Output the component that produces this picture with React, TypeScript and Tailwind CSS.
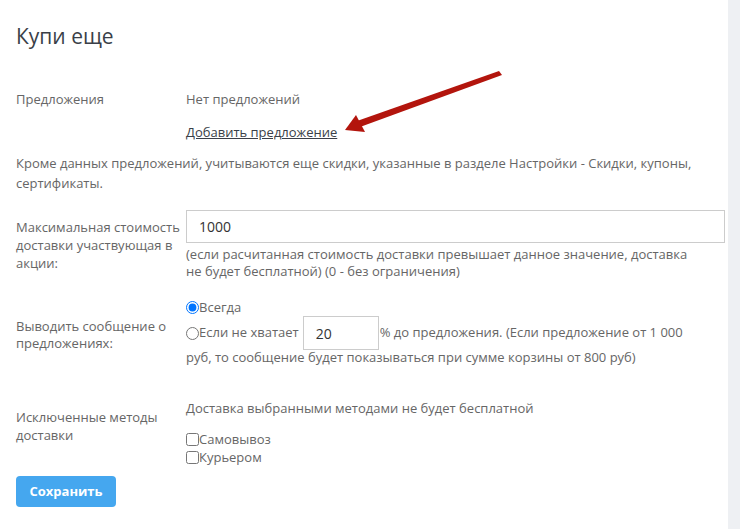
import React from "react";

const Arrow = () => (
  <svg
    className="pointer-events-none absolute left-0 top-0"
    width="740"
    height="200"
    viewBox="0 0 740 200"
  >
    <polygon points="499,71 502,75 360,127 357,121" fill="#b3150d" />
    <polygon points="345,130 356,115 365,132" fill="#b3150d" />
  </svg>
);

export default function App() {
  return (
    <div className="flex min-h-[529px] w-[740px] bg-[#eef0f3] font-['Open_Sans',sans-serif] text-[13px] text-[#666]">
      <div className="relative w-[728px] bg-white px-4 pb-5 pt-[21px]">
        <h1 className="text-[21px] leading-[30px] text-[#3a3f48]">Купи еще</h1>

        <div className="mt-[38px] flex">
          <div className="w-[170px] shrink-0 leading-5">Предложения</div>
          <div>
            <div className="leading-5">Нет предложений</div>
            <a href="#" className="mt-[13px] block leading-5 text-[#3a3f48] underline">
              Добавить предложение
            </a>
          </div>
        </div>

        <p className="mt-[11px] leading-5">
          Кроме данных предложений, учитываются еще скидки, указанные в разделе Настройки - Скидки, купоны,
          <br />
          сертификаты.
        </p>

        <div className="mt-[17px] flex">
          <div className="w-[170px] shrink-0 pt-[8px] leading-[18px]">
            Максимальная стоимость доставки участвующая в акции:
          </div>
          <div className="flex-1">
            <input
              defaultValue="1000"
              className="block h-[33px] w-[539px] border border-[#ccc] px-3 text-[14px] text-[#333] outline-none"
            />
            <div className="mt-[3px] leading-[17px]">
              (если расчитанная стоимость доставки превышает данное значение, доставка
              <br />
              не будет бесплатной) (0 - без ограничения)
            </div>
          </div>
        </div>

        <div className="mt-[18px] flex">
          <div className="w-[170px] shrink-0 pt-5 leading-[17px]">
            Выводить сообщение о предложениях:
          </div>
          <div>
            <label className="flex items-center leading-[18px]">
              <input type="radio" name="msg" defaultChecked className="m-0 h-[13px] w-[13px]" />
              Всегда
            </label>
            <div className="flex h-[34px] items-center">
              <label className="flex items-center">
                <input type="radio" name="msg" className="m-0 h-[13px] w-[13px]" />
                Если не хватает
              </label>
              <input
                defaultValue="20"
                className="ml-1 h-[34px] w-[76px] border border-[#ccc] px-3 text-[14px] text-[#333] outline-none"
              />
              <span className="ml-px">% до предложения. (Если предложение от 1 000</span>
            </div>
            <div className="leading-[14px]">
              руб, то сообщение будет показываться при сумме корзины от 800 руб)
            </div>
          </div>
        </div>

        <div className="mt-[35px] flex">
          <div className="w-[170px] shrink-0 pt-[9px] leading-[18px]">
            Исключенные методы
            <br />
            доставки
          </div>
          <div className="leading-[18px]">
            <div>Доставка выбранными методами не будет бесплатной</div>
            <div className="mt-[13px]">
              <label className="flex items-center">
                <input type="checkbox" className="m-0 h-[13px] w-[13px]" />
                Самовывоз
              </label>
              <label className="flex items-center">
                <input type="checkbox" className="m-0 h-[13px] w-[13px]" />
                Курьером
              </label>
            </div>
          </div>
        </div>

        <button
          type="button"
          className="mt-[10px] h-[31px] w-[100px] rounded bg-[#45a7ef] text-[13px] font-bold text-white"
        >
          Сохранить
        </button>

        <Arrow />
      </div>
    </div>
  );
}
